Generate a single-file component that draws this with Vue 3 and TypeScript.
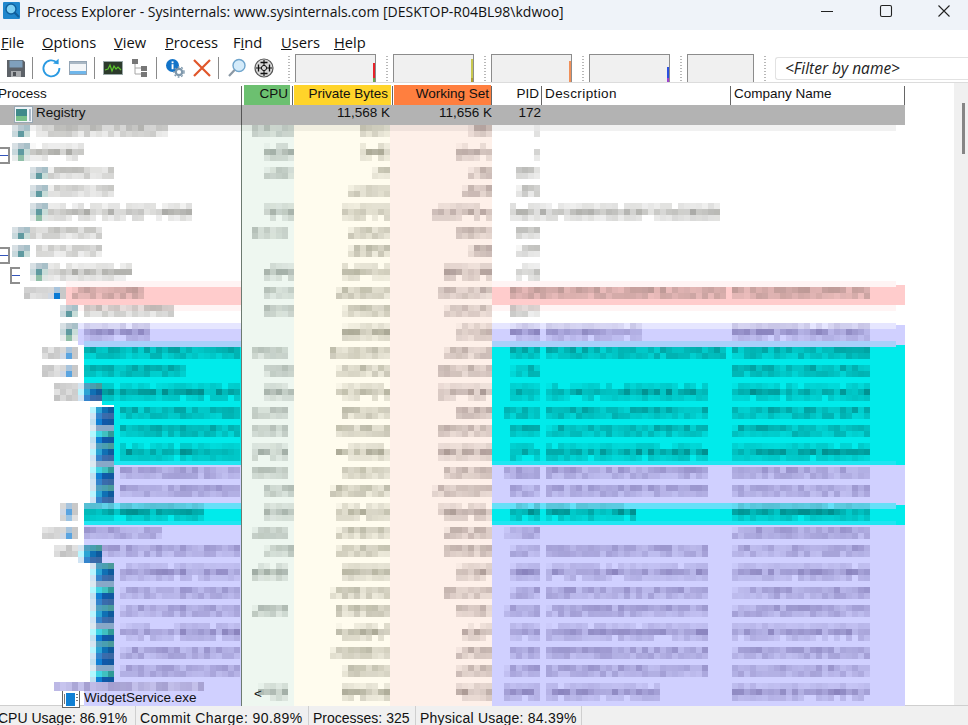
<script setup lang="ts">
type Tile = { x: number; y: number; w: number; h: number; fill: string; op: number }
type Span = [number, number] | null

interface RowDef {
  bg: string
  fill: number
  icon: [number, string]
  pre: Span
  name: Span
  cpu: Span
  priv: number
  ws: number
  pid: number
  desc: Span
  comp: Span
}

const COMP: Span = [732, 870]

const mk = (
  bg: string, fill: number, icon: [number, string], pre: Span, name: Span,
  cpu: Span, priv: number, ws: number, pid: number, desc: Span, comp: Span
): RowDef => ({ bg, fill, icon, pre, name, cpu, priv, ws, pid, desc, comp })

const C1: Span = [264, 294]
const C2: Span = [252, 288]

// row 0 (Registry) and row 29 (WidgetService) are partly real text, the rest is mosaic
const defs: RowDef[] = [
  mk('g', 36, [14, 'x'], null, null, null, 0, 0, 0, null, null),
  mk('w', 0, [12, 'g'], null, [36, 168], [252, 294], 360, 468, 534, null, null),
  mk('w', 0, [12, 'g'], null, [30, 84], C1, 360, 456, 534, null, null),
  mk('w', 0, [30, 'g'], null, [48, 114], C1, 372, 468, 516, null, null),
  mk('w', 0, [30, 'g'], null, [48, 114], null, 348, 462, 516, null, null),
  mk('w', 0, [30, 'g'], null, [48, 192], C1, 342, 432, 510, [540, 720], null),
  mk('w', 0, [12, 'g'], null, [30, 102], C2, 348, 456, 516, null, null),
  mk('w', 0, [12, 'g'], null, [36, 102], null, 348, 468, 516, null, null),
  mk('w', 0, [30, 'g'], null, [48, 132], C1, 342, 444, 516, null, null),
  mk('p', 66, [48, 'b'], [24, 48], [72, 144], C1, 336, 438, 510, [540, 726], COMP),
  mk('w', 0, [60, 'g'], null, [84, 174], C1, 342, 444, 510, null, null),
  mk('l', 78, [60, 'g'], null, [84, 150], null, 342, 456, 510, [546, 642], COMP),
  mk('c', 84, [60, 'b'], [42, 60], [84, 240], C2, 330, 444, 510, [546, 726], COMP),
  mk('c', 84, [60, 'b'], [42, 60], [84, 186], C1, 336, 438, 510, null, COMP),
  mk('c', 102, [78, 't'], [54, 78], [102, 240], C1, 336, 438, 510, [546, 708], COMP),
  mk('c', 114, [90, 't'], null, [120, 240], C2, 342, 456, 504, [546, 708], COMP),
  mk('c', 114, [90, 'u'], null, [120, 240], C2, 336, 438, 510, [546, 708], COMP),
  mk('c', 114, [90, 't'], null, [120, 240], C2, 336, 438, 510, [546, 708], COMP),
  mk('l', 114, [90, 'u'], null, [120, 240], C2, 342, 444, 504, [546, 708], COMP),
  mk('l', 114, [90, 't'], null, [120, 240], C1, 330, 432, 510, [546, 708], COMP),
  mk('c', 84, [60, 'b'], [60, 66], [84, 204], C1, 336, 438, 510, [546, 636], COMP),
  mk('l', 84, [60, 'b'], [42, 60], [84, 162], C2, 336, 444, 504, null, COMP),
  mk('l', 102, [78, 't'], [54, 78], [102, 240], C1, 336, 444, 510, [546, 708], COMP),
  mk('l', 114, [90, 't'], null, [120, 240], C2, 342, 456, 510, [546, 708], COMP),
  mk('l', 114, [90, 'u'], null, [120, 240], null, 330, 444, 510, [546, 708], COMP),
  mk('l', 114, [90, 't'], null, [120, 240], C2, 336, 456, 504, [546, 708], COMP),
  mk('l', 114, [90, 'u'], null, [120, 240], null, 336, 462, 510, [546, 708], COMP),
  mk('l', 114, [90, 't'], null, [120, 240], null, 330, 456, 510, [546, 708], COMP),
  mk('l', 114, [90, 'u'], null, [120, 240], null, 342, 456, 504, [546, 708], COMP),
  mk('l', 84, [0, 'x'], null, null, [258, 288], 342, 456, 504, [546, 660], COMP)
]

const iconTiles: Record<string, string[][]> = {
  g: [['#d8e0e4', '#b8c8d0', '#a8c0c8'], ['#c8d8dc', '#5f9aa0', '#c8dcd8'], ['#e8ecec', '#8fbfa8', '#dfe6e4']],
  b: [['#d8d8d8', '#a8c4dc', '#c8c8c8'], ['#d0d8e4', '#5aa4e0', '#c8c8c8'], ['#d4d4d4', '#9cc4e4', '#e0e0e0']],
  t: [['#d4e4f0', '#4f9fc0', '#4a9fb0', '#4a9a9c'], ['#b8f6ff', '#2ba4d4', '#1070b4', '#0f5a9c'], ['#d0e4f4', '#3484cc', '#3a6cac', '#3a68a4']],
  u: [['#dce8f0', '#8aa8c8', '#88a8c8', '#88a8c8'], ['#b0f8ff', '#40d4e4', '#40c0c0', '#309a98'], ['#c0e0f0', '#1080d4', '#1058a8', '#1058a0']]
}

const rng = (seed: number) => () => {
  seed = (seed * 1664525 + 1013904223) >>> 0
  return seed / 4294967296
}

const band = (bg: string) => {
  if (bg === 'c') return '#000'
  if (bg === 'l') return '#20105a'
  return '#2a2a20'
}

const mosaic = (def: RowDef, i: number): Tile[] => {
  const out: Tile[] = []
  const r = rng(i * 97 + 13)
  const kind = (i - 1) % 3
  const top = kind === 1 ? -2 : kind === 2 ? 2 : 0
  const strips = kind === 1 ? [0.09, 0.24, 0.11] : [0.19, 0.15]

  const put = (span: Span, color: string, boost = 1) => {
    if (!span) return
    strips.forEach((level, s) => {
      for (let x = span[0]; x < span[1]; x += 6) {
        const v = r()
        if (s !== 1 && kind === 1 && v < 0.14) continue
        const edge = x === span[0] && s === 0 && v < 0.4
        const op = level * boost * (0.55 + v * 1.1) * (edge ? 0.4 : 1)
        out.push({ x, y: top + s * 6, w: 6, h: 6, fill: color, op: Math.min(op, 0.6) })
      }
    })
  }

  if (i === 0) return out

  // pale bands the mosaic leaves around coloured rows
  const halo = (y: number, h: number, color: string, x0: number) => {
    out.push({ x: x0, y, w: 241 - x0, h, fill: color, op: 1 })
    out.push({ x: 492, y, w: 404, h, fill: color, op: 1 })
  }
  if (i === 1) {
    out.push({ x: 30, y: 0, w: 866, h: 6, fill: '#000', op: 0.055 })
  }
  if (def.bg === 'p') {
    halo(-4, 6, '#fff4f4', 66)
    halo(20, 6, '#fff4f4', 66)
  }
  if (i === 11) halo(-2, 6, '#e6e6ff', 78)
  if (i === 12) halo(-4, 6, '#a8d0fa', 84)
  if (i === 17) halo(16, 6, '#1fe6f2', 114)
  if (i === 20) {
    halo(-2, 6, '#66e0f8', 84)
    halo(16, 6, '#1fe6f2', 84)
  }

  if (def.pre) {
    strips.forEach((_, s) => {
      for (let x = def.pre![0]; x < def.pre![1]; x += 6) {
        out.push({ x, y: top + s * 6, w: 6, h: 6, fill: '#000', op: 0.1 + r() * 0.14 })
      }
    })
  }

  const type = def.icon[1]
  const ic = iconTiles[type]
  if (ic && (type === 't' || type === 'u')) {
    // these icons run on without a gap: 60px of rows hold ten 6px strips
    const sameAbove = defs[i - 1].icon[0] === def.icon[0]
    const ys = kind === 1 ? [-2, 4, 10] : kind === 2 ? [-4, 2, 8] : [-6, 0, 6, 12]
    ys.forEach((y, s) => {
      if (s === 0 && !sameAbove && kind !== 1) return
      const line = ic[(s + (kind === 0 ? 2 : 0)) % 3]
      line.forEach((fill, n) => {
        out.push({ x: def.icon[0] + n * 6, y, w: 6, h: 6, fill, op: 1 })
      })
    })
  } else if (ic) {
    const rowsOf = kind === 1 ? ic : ic.slice(0, 2)
    rowsOf.forEach((line, s) => {
      line.forEach((fill, n) => {
        out.push({ x: def.icon[0] + n * 6, y: top + s * 6, w: 6, h: 6, fill, op: 1 })
      })
    })
  }
  if (i === 9) out.push({ x: 54, y: 8, w: 6, h: 6, fill: '#0a7ad4', op: 1 })

  const col = band(def.bg)
  put(def.name, col, 1)
  put(def.cpu, '#2a3a30')
  put([def.priv, 390], '#2a2a10')
  put([def.ws, 492], '#301a18')
  put([def.pid, 540], col)
  put(def.desc, col)
  put(def.comp, col)

  if (i === 29) {
    // the name of the last row is only half hidden
    out.push({ x: 54, y: -3, w: 150, h: 9, fill: '#d4d2fa', op: 1 })
    for (let x = 54; x < 204; x += 6) {
      out.push({ x, y: -3, w: 6, h: 9, fill: col, op: 0.06 + r() * 0.2 })
    }
  }
  return out
}

const rows = defs.map((def, i) => ({ ...def, i, tiles: mosaic(def, i) }))

const menus = [
  { pre: '', key: 'F', post: 'ile', w: 41 },
  { pre: '', key: 'O', post: 'ptions', w: 72 },
  { pre: '', key: 'V', post: 'iew', w: 51 },
  { pre: '', key: 'P', post: 'rocess', w: 68 },
  { pre: 'F', key: 'i', post: 'nd', w: 48 },
  { pre: '', key: 'U', post: 'sers', w: 53 },
  { pre: '', key: 'H', post: 'elp', w: 40 }
]

const graphs = [
  { w: 81, spike: '#e8222a', foot: '#6aa84f', top: 7, foot_h: 4 },
  { w: 81, spike: '#c8c850', foot: '#b0a030', top: 3, foot_h: 4 },
  { w: 81, spike: '#f0905a', foot: '#f0905a', top: 5, foot_h: 4 },
  { w: 81, spike: '#2a50e0', foot: '#a040d0', top: 11, foot_h: 4 },
  { w: 67, spike: '', foot: '', top: 0, foot_h: 0 }
]

const status = [
  { text: 'CPU Usage: 86.91%', w: 136 },
  { text: 'Commit Charge: 90.89%', w: 173 },
  { text: 'Processes: 325', w: 107 },
  { text: 'Physical Usage: 84.39%', w: 166 }
]
</script>

<template>
  <div class="app">
    <header class="titlebar">
      <svg class="appicon" width="20" height="20" viewBox="0 0 20 20">
        <rect x="2" y="2" width="17" height="17" rx="1" fill="#1f86cc" />
        <circle cx="10" cy="9" r="5" fill="#7fd0f4" stroke="#0f5f9c" stroke-width="1.4" />
        <path d="M13.5 12.5 L18 17" stroke="#0f5f9c" stroke-width="2.2" />
      </svg>
      <span class="title">Process Explorer - Sysinternals: www.sysinternals.com [DESKTOP-R04BL98\kdwoo]</span>
      <div class="winbtns">
        <svg width="14" height="14" viewBox="0 0 14 14"><path d="M1 7.5H13" stroke="#222" stroke-width="1" /></svg>
        <svg width="14" height="14" viewBox="0 0 14 14"><rect x="1.5" y="1.5" width="11" height="11" rx="1.5" fill="none" stroke="#222" stroke-width="1.1" /></svg>
        <svg width="14" height="14" viewBox="0 0 14 14"><path d="M1.5 1.5L12.5 12.5M12.5 1.5L1.5 12.5" stroke="#222" stroke-width="1.1" /></svg>
      </div>
    </header>

    <nav class="menubar">
      <span v-for="m in menus" :key="m.key" class="menu" :style="{ width: m.w + 'px' }">{{ m.pre }}<u>{{ m.key }}</u>{{ m.post }}</span>
    </nav>

    <div class="toolbar">
      <div class="tools">
        <button class="tool">
          <svg width="20" height="20" viewBox="0 0 20 20">
            <path d="M1 2H17L19 4V19H1Z" fill="#5d6268" />
            <rect x="3.5" y="2.5" width="13" height="7" fill="#7fa0bc" />
            <rect x="5" y="13" width="10" height="6" fill="#a8abae" />
            <rect x="7" y="14" width="3" height="4" fill="#4e5257" />
          </svg>
        </button>
        <i class="sep"></i>
        <button class="tool">
          <svg width="20" height="20" viewBox="0 0 20 20">
            <path d="M16 4.6A8 8 0 1 0 18.4 10" fill="none" stroke="#2a9ae2" stroke-width="1.8" />
            <path d="M12 5.6L17.6 6.2L17.6 0.8Z" fill="#2a9ae2" />
          </svg>
        </button>
        <button class="tool">
          <svg width="20" height="20" viewBox="0 0 20 20">
            <rect x="1.5" y="3.5" width="17" height="13" fill="#f4f6f8" stroke="#93a4b4" />
            <rect x="2" y="4" width="16" height="2" fill="#aab8c4" />
            <rect x="2" y="13" width="16" height="3" fill="#6fb6ea" />
          </svg>
        </button>
        <i class="sep"></i>
        <button class="tool">
          <svg width="20" height="20" viewBox="0 0 20 20">
            <rect x="0.5" y="3.5" width="19" height="13" fill="#2c3a2c" stroke="#9aa8a8" />
            <path d="M2 12L5 11L7 7L9 13L11 8L13 11L15 9L18 12" fill="none" stroke="#5cc62e" stroke-width="1.2" />
          </svg>
        </button>
        <button class="tool">
          <svg width="18" height="20" viewBox="0 0 18 20">
            <path d="M4 5V16H11M4 10H11" fill="none" stroke="#a6a6a6" stroke-width="1" />
            <rect x="1" y="1" width="6" height="5" fill="#777" />
            <rect x="10" y="8" width="6" height="5" fill="#777" />
            <rect x="10" y="14" width="6" height="5" fill="#777" />
          </svg>
        </button>
        <i class="sep"></i>
        <button class="tool">
          <svg width="20" height="20" viewBox="0 0 20 20">
            <circle cx="7.5" cy="7.5" r="6.5" fill="#1273c8" />
            <rect x="6.6" y="6.2" width="1.9" height="5" fill="#fff" />
            <rect x="6.6" y="3.4" width="1.9" height="1.8" fill="#fff" />
            <circle cx="14" cy="14" r="3.2" fill="none" stroke="#7f98ac" stroke-width="2.2" />
            <circle cx="14" cy="14" r="5" fill="none" stroke="#7f98ac" stroke-width="1.4" stroke-dasharray="1.8 1.8" />
          </svg>
        </button>
        <button class="tool">
          <svg width="20" height="20" viewBox="0 0 20 20"><path d="M2 2L18 18M18 2L2 18" stroke="#e0562a" stroke-width="2.2" /></svg>
        </button>
        <i class="sep"></i>
        <button class="tool">
          <svg width="20" height="20" viewBox="0 0 20 20">
            <circle cx="12" cy="7.5" r="6" fill="#d4ebfa" stroke="#6ea4cc" stroke-width="1.4" />
            <path d="M7.6 12L2 18" stroke="#8a98a4" stroke-width="2.2" />
          </svg>
        </button>
        <button class="tool">
          <svg width="20" height="20" viewBox="0 0 20 20">
            <circle cx="10" cy="10" r="9" fill="#d8d8d8" stroke="#555" stroke-width="1.2" />
            <path d="M10 2V18M2 10H18" stroke="#111" stroke-width="1.1" />
            <path d="M6.5 4.5H13.5M6.5 15.5H13.5M4.5 6.5V13.5M15.5 6.5V13.5" stroke="#111" stroke-width="1.3" />
            <circle cx="10" cy="10" r="2.6" fill="#d8d8d8" stroke="#111" />
          </svg>
        </button>
      </div>
      <template v-for="(g, n) in graphs" :key="n">
        <i class="grip"></i>
        <div class="graph" :style="{ width: g.w + 'px' }">
          <svg v-if="g.spike" class="spike" width="2" height="26" viewBox="0 0 2 26">
            <rect x="0" :y="g.top" width="2" :height="26 - g.top" :fill="g.spike" />
            <rect x="0" :y="26 - g.foot_h" width="2" :height="g.foot_h" :fill="g.foot" />
          </svg>
        </div>
      </template>
      <i class="grip"></i>
      <div class="filter">&lt;Filter by name&gt;</div>
    </div>

    <div class="main">
      <div class="list">
        <div class="head">
          <div class="hc hc-proc"><span class="htext proc-h">Process</span></div>
          <div class="hc hc-cpu"><span class="hfill green">CPU</span></div>
          <div class="hc hc-num"><span class="hfill yellow">Private Bytes</span></div>
          <div class="hc hc-ws"><span class="hfill orange">Working Set</span></div>
          <div class="hc hc-pid"><span class="htext">PID</span></div>
          <div class="hc hc-left"><span class="htext wide">Description</span></div>
          <div class="hc hc-left"><span class="htext">Company Name</span></div>
        </div>

        <div v-for="row in rows" :key="row.i" class="row" :class="'bg-' + row.bg">
          <div class="cell proc" :style="{ paddingLeft: row.fill + 'px' }">
            <div class="proc-fill">
              <span v-if="row.i === 0" class="name">Registry</span>
              <span v-if="row.i === 29" class="name widget">WidgetService.exe</span>
            </div>
          </div>
          <div class="cell cpu"><span v-if="row.i === 29" class="chev">&lt;</span></div>
          <div class="cell priv"><span v-if="row.i === 0">11,568 K</span></div>
          <div class="cell ws"><span v-if="row.i === 0">11,656 K</span></div>
          <div class="cell pid"><span v-if="row.i === 0">172</span></div>
          <div class="cell desc"></div>
          <div class="cell comp"></div>

          <svg v-if="row.i === 0" class="regicon" width="20" height="18" viewBox="0 0 20 18">
            <rect x="0.5" y="0.5" width="18" height="16" fill="#f0f4f8" stroke="#98a8b4" />
            <rect x="2" y="3" width="11" height="12" fill="#3f8a8a" />
            <rect x="2" y="10" width="11" height="5" fill="#78c08a" />
            <rect x="15" y="3" width="2" height="12" fill="#a8b8c8" />
          </svg>
          <svg v-if="row.i === 29" class="regicon widget-icon" width="18" height="18" viewBox="0 0 18 18">
            <rect x="0.5" y="0.5" width="17" height="17" fill="#fff" stroke="#666" />
            <rect x="4" y="3" width="9" height="13" fill="#1080d4" />
            <rect x="14" y="4" width="2" height="1" fill="#777" />
            <rect x="14" y="7" width="2" height="1" fill="#777" />
            <rect x="14" y="10" width="2" height="1" fill="#777" />
            <rect x="2" y="4" width="1" height="10" fill="#777" />
          </svg>
          <svg v-if="row.tiles.length" class="mosaic" width="905" height="20" viewBox="0 0 905 20">
            <rect v-for="(t, n) in row.tiles" :key="n" :x="t.x" :y="t.y" :width="t.w" :height="t.h" :fill="t.fill" :fill-opacity="t.op" />
          </svg>
          <i v-if="row.i === 2 || row.i === 7" class="toggle"></i>
          <i v-if="row.i === 8" class="toggle inner"></i>
        </div>
      </div>
      <div class="scroll"><div class="thumb"></div></div>
    </div>

    <footer class="statusbar">
      <span v-for="s in status" :key="s.text" class="stat" :style="{ width: s.w + 'px' }">{{ s.text }}</span>
    </footer>
  </div>
</template>

<style>
html, body { margin: 0; background: #fff; overflow: hidden; }
</style>

<style scoped>
.app {
  width: 968px;
  height: 725px;
  display: flex;
  flex-direction: column;
  overflow: hidden;
  font-family: "Open Sans", "Liberation Sans", sans-serif;
  color: #111;
  background: #fff;
}

.titlebar {
  height: 30px;
  flex: none;
  display: flex;
  align-items: flex-start;
  background: #eff3f9;
  padding-left: 1px;
}

.appicon { margin-right: 6px; }

.title { font-size: 14px; line-height: 23px; white-space: nowrap; }

.winbtns {
  margin-left: auto;
  margin-top: 4px;
  width: 148px;
  padding-right: 17px;
  display: flex;
  justify-content: space-between;
  box-sizing: border-box;
}

.menubar {
  height: 24px;
  flex: none;
  display: flex;
  align-items: center;
  padding-left: 1px;
  font-size: 14.7px;
}

.menu { white-space: nowrap; flex: none; }

.toolbar {
  height: 29px;
  flex: none;
  display: flex;
  align-items: flex-end;
  border-bottom: 1px solid #dcdcdc;
  box-sizing: border-box;
}

.tools {
  display: flex;
  align-items: center;
  align-self: stretch;
  padding-left: 2.5px;
  width: 284px;
  box-sizing: border-box;
  flex: none;
}

.tool {
  width: 27px;
  height: 28px;
  padding: 0;
  border: none;
  background: none;
  display: flex;
  align-items: center;
  justify-content: center;
}

.sep {
  width: 8px;
  height: 22px;
  flex: none;
  background: linear-gradient(#8a8a8a, #8a8a8a) 2px 0 / 1px 100% no-repeat;
}

.grip {
  width: 11px;
  height: 26px;
  flex: none;
  align-self: flex-end;
  background: repeating-linear-gradient(#b8b8b8 0 1px, transparent 1px 3px) 4px 0 / 2px 100% no-repeat;
}

.graph {
  height: 28px;
  flex: none;
  box-sizing: border-box;
  background: #f0f0f0;
  border: 1px solid #8c8c8c;
  border-bottom: none;
  display: flex;
  justify-content: flex-end;
  align-items: flex-end;
  padding-right: 0;
  margin-right: 6px;
}

.spike { display: block; }

.filter {
  flex: 1;
  height: 23px;
  margin-bottom: 2px;
  margin-left: 4px;
  background: #fff;
  border: 1px solid #e2e2e2;
  border-right: none;
  border-radius: 3px 0 0 3px;
  box-sizing: border-box;
  padding-left: 9px;
  font-size: 15.5px;
  font-style: italic;
  line-height: 20px;
  color: #222;
}

.main {
  flex: 1;
  display: flex;
  min-height: 0;
  font-family: "Liberation Sans", Arial, sans-serif;
  font-size: 13.5px;
}

.list { width: 905px; flex: none; padding-top: 2px; }

.head {
  height: 20px;
  display: grid;
  grid-template-columns: 242px 51px 100px 99px 50px 189px 174px;
}

.hc {
  border-right: 1px solid #666;
  height: 19px;
  margin-top: 1px;
  box-sizing: border-box;
  display: flex;
  justify-content: flex-end;
  line-height: 15px;
  white-space: nowrap;
}

.hc-proc { justify-content: flex-start; }
.hc-left { justify-content: flex-start; padding-left: 3px; }
.hc-cpu { padding: 0 1px 0 2px; }
.hc-num, .hc-ws { padding-left: 1px; }
.hc-pid { padding-right: 2px; }
.hc-proc .proc-h { margin-left: -2px; }

.wide { letter-spacing: 0.4px; }

.hfill {
  flex: 1;
  height: 21px;
  margin-top: -1px;
  padding-right: 2px;
  text-align: right;
  line-height: 17px;
}

.hc-cpu .hfill { margin-right: 1px; }
.hc-num .hfill { margin-right: 1px; padding-right: 3px; }

.green { background: #6cc070; }
.yellow { background: #ffd42a; }
.orange { background: #ff7f3f; }

.row {
  height: 20px;
  position: relative;
  display: grid;
  grid-template-columns: 241px 53px 96px 102px 49px 190px 174px;
}

.cell { box-sizing: border-box; line-height: 16px; text-align: right; white-space: nowrap; }

.proc { text-align: left; display: flex; }
.proc-fill { flex: 1; position: relative; min-width: 0; }

.cpu { background: #eef7f0; border-left: 1px solid #6c7a70; position: relative; }
.priv { background: #fffcee; }
.ws { background: #fef0e9; }

.bg-g .proc-fill, .bg-g .cell { background: #b3b3b3; }
.bg-g .cpu { border-left-color: #555; }
.bg-p .proc-fill, .bg-p .pid, .bg-p .desc, .bg-p .comp { background: #ffcccc; }
.bg-l .proc-fill, .bg-l .pid, .bg-l .desc, .bg-l .comp { background: #d0d0ff; }
.bg-c .proc-fill, .bg-c .pid, .bg-c .desc, .bg-c .comp { background: #00ebeb; }

.name { display: block; text-align: left; }
.widget { padding-top: 5px; }

.chev {
  position: absolute;
  left: 12px;
  top: 1px;
}

.regicon { position: absolute; left: 14px; top: 1px; }
.widget-icon { left: 62px; top: 5px; }

.mosaic { position: absolute; left: 0; top: 0; overflow: visible; pointer-events: none; }

.toggle {
  position: absolute;
  left: -3px;
  top: 2px;
  width: 9px;
  height: 13px;
  border: 2px solid #8e8e8e;
  background: linear-gradient(#3355bb, #3355bb) 0 50% / 100% 1px no-repeat, #fff;
}

.toggle.inner {
  left: 10px;
  width: 8px;
  border-right: none;
}

.scroll {
  margin-left: auto;
  width: 14px;
  background: #f0f0f0;
  position: relative;
}

.thumb {
  position: absolute;
  left: 8px;
  top: 20px;
  width: 3px;
  height: 51px;
  background: #858585;
}

.statusbar {
  height: 20px;
  flex: none;
  display: flex;
  background: #f0f0f0;
  border-top: 1px solid #cfcfcf;
  box-sizing: border-box;
  font-family: "Liberation Sans", Arial, sans-serif;
  font-size: 14px;
  line-height: 24px;
  overflow: hidden;
}

.stat {
  flex: none;
  box-sizing: border-box;
  border-right: 1px solid #cfcfcf;
  padding-left: 4px;
  white-space: nowrap;
}

.stat:first-child { padding-left: 0; text-indent: -2px; }
.stat:nth-child(2) { letter-spacing: 0.45px; }
.stat:nth-child(4) { letter-spacing: 0.22px; }
</style>
